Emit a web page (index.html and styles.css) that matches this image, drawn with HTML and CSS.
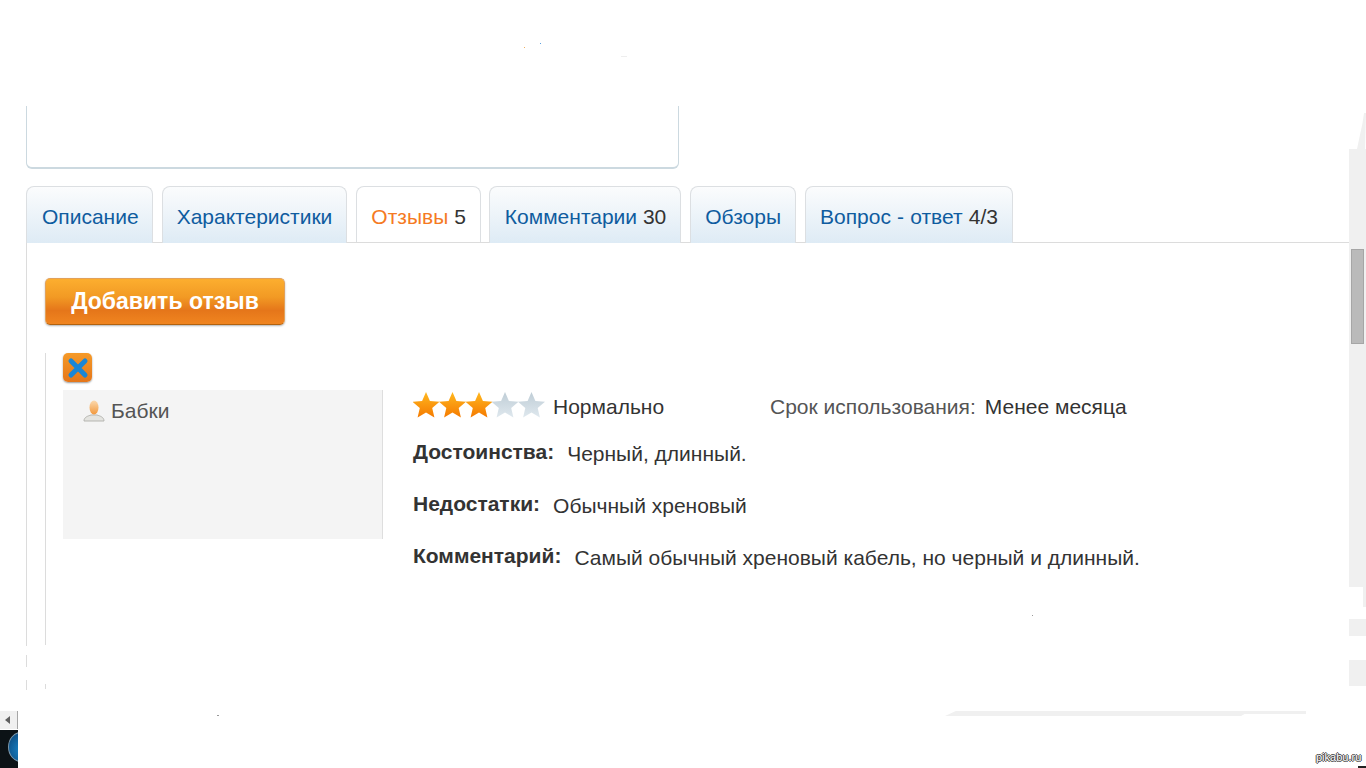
FILE: index.html
```html
<!DOCTYPE html>
<html lang="ru">
<head>
<meta charset="utf-8">
<title>Отзывы</title>
<link rel="stylesheet" href="styles.css">
</head>
<body>
<div class="page">
  <div class="top-box"></div>
  <nav class="tabs">
    <a class="tab tab-first">Описание</a>
    <a class="tab">Характеристики</a>
    <a class="tab active"><span class="tab-on">Отзывы</span> <span class="count">5</span></a>
    <a class="tab tab-wide">Комментарии <span class="count">30</span></a>
    <a class="tab">Обзоры</a>
    <a class="tab tab-last">Вопрос - ответ <span class="count">4/3</span></a>
  </nav>
  <section class="panel">
    <button class="add-btn">Добавить отзыв</button>
    <article class="review">
      <div class="close">
        <svg width="22" height="22" viewBox="0 0 22 22"><path d="M4 4 18 18M18 4 4 18" stroke="#1b86d6" stroke-width="5" stroke-linecap="round"/></svg>
      </div>
      <div class="review-body">
        <aside class="author">
          <svg class="avatar" width="22" height="24" viewBox="0 0 22 24">
            <defs><linearGradient id="head" x1="0" y1="0" x2="0" y2="1"><stop offset="0" stop-color="#fbd9ae"/><stop offset="1" stop-color="#f2983c"/></linearGradient></defs>
            <path d="M1 22c0-4 4-5 7-6h6c3 1 7 2 7 6z" fill="#e4e4e0" stroke="#b5b5b0"/>
            <ellipse cx="11" cy="8.500" rx="4.500" ry="7" fill="url(#head)"/>
          </svg>
          <span>Бабки</span>
        </aside>
        <div class="details">
          <div class="rating-row">
            <div class="stars">
              <svg width="132" height="26" viewBox="0 0 132 26">
                <defs>
                  <linearGradient id="on" x1="0" y1="0" x2="0" y2="1"><stop offset="0" stop-color="#ffb81f"/><stop offset="1" stop-color="#f57a00"/></linearGradient>
                  <linearGradient id="off" x1="0" y1="0" x2="0" y2="1"><stop offset="0" stop-color="#bfcdd6"/><stop offset="1" stop-color="#dfe8ee"/></linearGradient>
                  <path id="star" d="M13 0l3.900 8.900 9.600.800-7.300 6.400 2.200 9.400-8.400-5-8.400 5 2.200-9.400-7.300-6.400 9.600-.800z"/>
                </defs>
                <use href="#star" x="0" fill="url(#on)"/>
                <use href="#star" x="26.500" fill="url(#on)"/>
                <use href="#star" x="53" fill="url(#on)"/>
                <use href="#star" x="79" fill="url(#off)"/>
                <use href="#star" x="105.500" fill="url(#off)"/>
              </svg>
            </div>
            <span class="rating-label">Нормально</span>
            <span class="term-label">Срок использования:</span>
            <span class="term-value">Менее месяца</span>
          </div>
          <p class="line"><b>Достоинства:</b><span>Черный, длинный.</span></p>
          <p class="line"><b>Недостатки:</b><span>Обычный хреновый</span></p>
          <p class="line"><b>Комментарий:</b><span>Самый обычный хреновый кабель, но черный и длинный.</span></p>
        </div>
      </div>
    </article>
  </section>
</div>

<div class="scroll-tip"></div>
<div class="scroll-track"><div class="scroll-thumb"></div></div>
<div class="scroll-patch patch-a"></div>
<div class="scroll-patch patch-b"></div>
<div class="scroll-patch patch-c"></div>
<div class="frag-h"></div>
<div class="stub stub-a"></div>
<div class="stub stub-b"></div>
<div class="stub stub-c"></div>
<div class="dot dot-a"></div>
<div class="dot dot-b"></div>
<div class="dot dot-c"></div>
<div class="dot dot-d"></div>
<div class="dot dot-e"></div>
<div class="frag-left"><span class="arrow"></span></div>
<div class="taskbar"><span class="orb"></span></div>
<div class="watermark">pikabu.ru</div>
<div class="corner-mark"></div>
</body>
</html>
```
FILE: styles.css
```css
* { box-sizing: border-box; }
html, body { margin: 0; height: 100%; overflow: hidden; background: #fff; }
body { font-family: "Liberation Sans", Arial, sans-serif; color: #333; }

.page { padding: 0 0 0 26px; display: flex; flex-direction: column; }

.top-box {
  width: 653px; height: 63px; margin-top: 106px;
  border: 1px solid #ccd9e0; border-top: 0; border-bottom-width: 2px;
  border-radius: 0 0 6px 6px;
}

.tabs { display: flex; gap: 9px; margin-top: 17px; height: 57px; border-bottom: 1px solid #dcdcdc; margin-right: 17px; }
.tab {
  height: 57px; padding: 18px 14px 0 14px; font-size: 21px; line-height: 23px;
  color: #0f5c9f; white-space: nowrap;
  border: 1px solid #dcdfe2; border-bottom: 0; border-radius: 8px 8px 0 0;
  background: linear-gradient(#fbfcfd, #deebf5);
}
.tab-first { padding-left: 15px; padding-right: 13px; }
.tab-wide { margin-left: -1px; padding-left: 15px; }
.tab-last { width: 208px; padding-right: 0; word-spacing: .3px; }
.tab.active { background: #fff; height: 56px; }
.tab-on { color: #f57a23; }
.count { color: #333; }

.panel { border-left: 1px solid #dcdcdc; padding: 35px 0 0 18px; height: 403px; }

.add-btn {
  display: block; width: 240px; height: 47px; padding: 0;
  border: 1px solid #e2a15a; border-bottom: 1px solid #b2620f; border-radius: 5px;
  background: linear-gradient(#fcae2f 0, #f29a24 40%, #e5761a 70%, #f08520 100%);
  box-shadow: 0 1px 2px rgba(0,0,0,.3);
  color: #fff; font: bold 23px "Liberation Sans", Arial, sans-serif;
}

.review { margin-top: 28px; border-left: 1px solid #dcdcdc; padding-left: 17px; height: 292px; }
.close {
  width: 29px; height: 29px; margin-top: 1px; display: flex; align-items: center; justify-content: center;
  border-radius: 5px; background: linear-gradient(#f59a28, #e5761a); box-shadow: 0 1px 2px rgba(0,0,0,.4);
}
.review-body { display: flex; margin-top: 8px; }
.author {
  width: 320px; height: 149px; padding: 9px 0 0 20px; background: #f4f4f4; border-right: 1px solid #dedede;
  display: flex; align-items: flex-start; gap: 6px; font-size: 21px; line-height: 24px; color: #555;
}
.avatar { flex: none; }
.details { padding-left: 30px; font-size: 21px; }
.rating-row { display: flex; align-items: flex-start; height: 26px; margin-top: 2px; line-height: 26px; }
.stars { display: flex; width: 132px; height: 26px; flex: none; }
.rating-label { margin: 2px 0 0 8px; width: 217px; flex: none; }
.term-label { color: #555; margin-top: 2px; }
.term-value { margin: 2px 0 0 9px; }
.line { margin: 0; height: 52px; display: flex; line-height: 24px; align-items: flex-start; }
.rating-row + .line { margin-top: 24px; }
.line b { margin-right: 13px; position: relative; top: -2px; }
.line span { color: #333; }

.scroll-tip { position: absolute; left: 1357px; top: 113px; width: 9px; height: 36px; background: #f0f0f0; clip-path: polygon(0 100%, 25% 70%, 60% 30%, 78% 0, 100% 0, 90% 100%); }
.scroll-track { position: absolute; left: 1349px; top: 149px; width: 17px; height: 438px; background: #f0f0f0; }
.scroll-thumb { position: absolute; left: 2px; top: 100px; width: 13px; height: 95px; background: #bababa; border: 1px solid #a6a6a6; }
.scroll-patch { position: absolute; background: #f0f0f0; }
.patch-a { left: 1349px; width: 17px; top: 619px; height: 17px; }
.patch-b { left: 1349px; width: 17px; top: 660px; height: 26px; }
.patch-c { left: 1363px; width: 3px; top: 587px; height: 20px; }
.frag-h { position: absolute; left: 945px; top: 711px; width: 361px; height: 5px; background: #f0f0f0; clip-path: polygon(0 100%, 3% 0, 100% 0, 100% 60%, 83% 60%, 82% 100%); }
.stub { position: absolute; width: 1px; background: #dcdcdc; }
.stub-a { left: 26px; top: 655px; height: 12px; }
.stub-b { left: 26px; top: 680px; height: 10px; }
.stub-c { left: 45px; top: 684px; height: 5px; }
.dot { position: absolute; width: 1px; height: 1px; background: #999; }
.dot-a { left: 524px; top: 47px; background: #f0b060; }
.dot-b { left: 540px; top: 43px; background: #5aa0e0; }
.dot-c { left: 621px; top: 56px; width: 6px; background: #eee; }
.dot-d { left: 1032px; top: 615px; }
.dot-e { left: 217px; top: 715px; width: 2px; }
.frag-left { position: absolute; left: 0; top: 711px; width: 18px; height: 18px; background: #f0f0f0; display: flex; align-items: center; padding-left: 5px; border-right: 1px solid #a6a6a6; }
.arrow { width: 0; height: 0; border: 4px solid transparent; border-left: 0; border-right: 5px solid #606060; }
.taskbar { position: absolute; left: 0; top: 730px; width: 18px; height: 38px; background: #0c1216; overflow: hidden; }
.orb { position: absolute; left: 8px; top: 2px; width: 26px; height: 30px; border-radius: 50%; background: radial-gradient(circle at 60% 60%, #1a8ad0, #0b3f70); border: 1px solid #7d99ad; }
.watermark { position: absolute; left: 1316px; top: 750px; font: 11px/14px "Liberation Sans", sans-serif; color: #fff; text-shadow: -1px 0 #444, 1px 0 #444, 0 -1px #444, 0 1px #444; }
.corner-mark { position: absolute; left: 1358px; top: 766px; width: 8px; height: 2px; background: #222; }
```
